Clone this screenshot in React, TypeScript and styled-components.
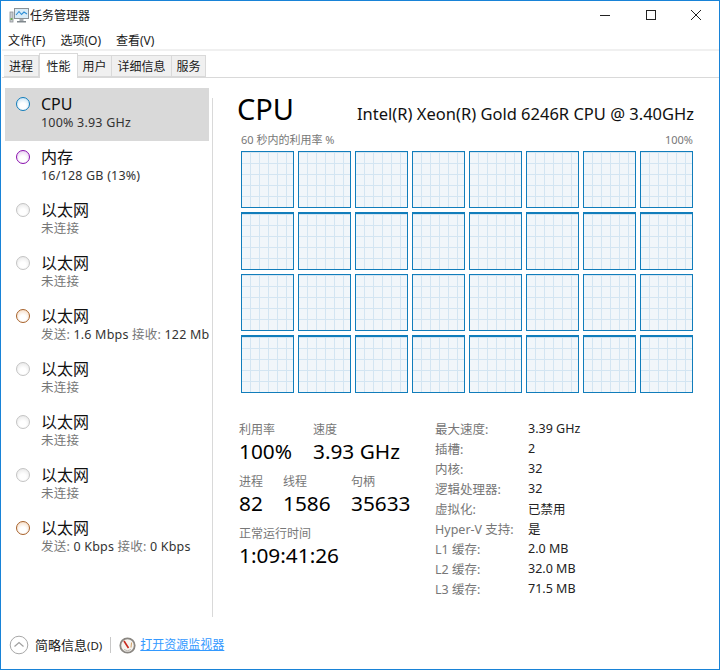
import React from 'react';
import styled, { createGlobalStyle } from 'styled-components';

const GlobalStyle = createGlobalStyle`
  html, body {
    margin: 0;
    padding: 0;
    background: #fff;
  }
  body {
    font-family: "Noto Sans", "Noto Sans CJK SC", sans-serif;
    color: #000;
  }
`;

const Window = styled.div`
  box-sizing: border-box;
  width: 720px;
  height: 670px;
  border: 1px solid #1883d7;
  padding-left: 1px;
  background: #fff;
  display: flex;
  flex-direction: column;
  overflow: hidden;
`;

const TitleBar = styled.div`
  height: 28px;
  flex: none;
  display: flex;
  align-items: center;
  padding-left: 7px;
  gap: 1px;
  font-size: 12px;
  color: #1a1a1a;
`;

const TitleText = styled.span`
  flex: 1;
`;

const WindowButtons = styled.div`
  display: flex;
  align-items: center;
  gap: 33.5px;
  padding-right: 17px;
`;

const MenuBar = styled.div`
  box-sizing: border-box;
  height: 22px;
  flex: none;
  display: flex;
  align-items: center;
  gap: 15px;
  padding: 2px 0 0 6px;
  font-size: 12px;
  color: #1a1a1a;
  border-bottom: 2px solid #f0f0f0;
`;

const TabStrip = styled.div`
  height: 26px;
  flex: none;
  display: flex;
  align-items: flex-end;
  padding-left: 2px;
  border-bottom: 1px solid #d9d9d9;
  font-size: 12px;
`;

const Tab = styled.div<{ $active?: boolean; $w: number }>`
  box-sizing: border-box;
  width: ${(p) => p.$w}px;
  height: ${(p) => (p.$active ? 25 : 22)}px;
  margin-bottom: ${(p) => (p.$active ? -1 : 0)}px;
  display: flex;
  align-items: center;
  justify-content: center;
  background: ${(p) => (p.$active ? '#fff' : '#f0f0f0')};
  border: 1px solid #d9d9d9;
  border-left-width: ${(p) => (p.$active ? 1 : 0)}px;
  border-bottom-width: ${(p) => (p.$active ? 0 : 1)}px;
  color: #1a1a1a;
  position: relative;
`;

const Body = styled.div`
  flex: 1;
  display: flex;
  min-height: 0;
`;

const Sidebar = styled.div`
  width: 207px;
  padding: 10px 0 0 3px;
  flex: none;
  box-sizing: border-box;
`;

const SideRow = styled.div<{ $selected?: boolean }>`
  width: 204px;
  height: 53px;
  display: flex;
  background: ${(p) => (p.$selected ? '#d9d9d9' : 'transparent')};
  padding: 6px 0 0 11px;
  box-sizing: border-box;
  white-space: nowrap;
`;

const Dot = styled.span<{ $edge: string; $fill: string }>`
  flex: none;
  box-sizing: border-box;
  width: 14px;
  height: 14px;
  margin-top: 3px;
  border-radius: 50%;
  border: 1px solid ${(p) => p.$edge};
  background: radial-gradient(circle at 50% 65%, #fff 30%, ${(p) => p.$fill} 100%);
`;

const SideText = styled.div`
  margin-left: 11px;
  display: flex;
  flex-direction: column;
`;

const SideName = styled.div`
  font-size: 16px;
  line-height: 20px;
  color: #111;
`;

const SideDetail = styled.div<{ $muted?: boolean }>`
  font-size: 12.5px;
  letter-spacing: 0.2px;
  line-height: 17px;
  color: ${(p) => (p.$muted ? '#777' : '#333')};
`;

const SideMuted = styled.span`
  color: #777;
`;

const Divider = styled.div`
  flex: none;
  width: 1px;
  height: 519px;
  margin: 20px 0 0 3px;
  background: #d9d9d9;
  position: relative;
  z-index: 1;
`;

const Main = styled.div`
  flex: 1;
  padding: 12px 25px 0 25px;
  min-width: 0;
  background: #fff;
`;

const Heading = styled.div`
  display: flex;
  justify-content: space-between;
  align-items: baseline;
`;

const HeadTitle = styled.div`
  font-size: 29px;
  line-height: 38px;
  margin-left: -1px;
`;

const HeadModel = styled.div`
  font-size: 16.5px;
  color: #111;
`;

const AxisRow = styled.div`
  display: flex;
  justify-content: space-between;
  font-size: 11px;
  line-height: 14px;
  color: #777;
  margin: 5px 1px 4px 3px;
`;

const CoreGrid = styled.div`
  display: grid;
  grid-template-columns: repeat(8, 53px);
  grid-template-rows: 57px 58px 57px 58px;
  gap: 4px;
  margin-left: 3px;
`;

const Core = styled.div<{ $thick?: boolean }>`
  box-sizing: border-box;
  border: 1px solid #117dbb;
  border-top-width: ${(p) => (p.$thick ? 2 : 1)}px;
  background-color: #f1f6fa;
  background-image:
    linear-gradient(to right, transparent 8px, #d3e5f2 8px),
    linear-gradient(to bottom, transparent 10px, #d3e5f2 10px);
  background-size: 9px 11px;
  background-position: 0 1px;
`;

const Stats = styled.div`
  display: flex;
  margin-top: 25px;
  padding-left: 1px;
`;

const Figures = styled.div`
  width: 196px;
  flex: none;
  display: flex;
  flex-direction: column;
  gap: 8px;
  margin-top: 3px;
`;

const FigureRow = styled.div`
  display: flex;
`;

const Figure = styled.div<{ $w?: number }>`
  width: ${(p) => (p.$w ? `${p.$w}px` : 'auto')};
  flex: none;
`;

const FigureLabel = styled.div`
  font-size: 12px;
  line-height: 17px;
  color: #777;
`;

const FigureValue = styled.div`
  font-size: 20.8px;
  line-height: 27px;
  color: #000;
`;

const Specs = styled.div`
  display: grid;
  grid-template-columns: 93px auto;
  grid-auto-rows: 20px;
  align-items: center;
  font-size: 12.5px;
`;

const SpecLabel = styled.div`
  color: #777;
`;

const SpecValue = styled.div`
  color: #222;
`;

const Footer = styled.div`
  height: 48px;
  flex: none;
  display: flex;
  align-items: center;
  padding-left: 7px;
  font-size: 12px;
`;

const Fewer = styled.span`
  margin-left: 6px;
  padding-bottom: 2px;
  font-size: 13px;
  color: #1a1a1a;
`;

const FewerKey = styled.span`
  font-size: 11.5px;
`;

const FooterRule = styled.span`
  width: 1px;
  height: 16px;
  background: #c8c8c8;
  margin: 0 8px;
`;

const MonitorLink = styled.span`
  margin: 0 0 2px 4px;
  color: #3399ff;
  text-decoration: underline;
`;

const AppIcon = () => (
  <svg width="20" height="18" viewBox="0 0 20 18">
    <rect x="1" y="6" width="3" height="10" fill="#c9ced1" stroke="#8d9296" strokeWidth="0.8" />
    <rect x="1.6" y="12" width="1.8" height="2" fill="#6fae4e" />
    <rect x="5.5" y="2.5" width="14" height="10" fill="#d9ecf8" stroke="#8b9297" />
    <path d="M7 9 L10 5.5 L12.5 8.5 L15 6 L18 8" fill="none" stroke="#2f8fd6" strokeWidth="1.1" />
    <rect x="10.5" y="13" width="4" height="2" fill="#a6acb0" />
    <rect x="8" y="15" width="9" height="1.5" fill="#80878c" />
  </svg>
);

const WinIcon = ({ kind }: { kind: 'min' | 'max' | 'close' }) => (
  <svg width="12" height="12" viewBox="0 0 12 12" fill="none" stroke="#222" strokeWidth="1">
    {kind === 'min' && <path d="M1 6.5H11" />}
    {kind === 'max' && <rect x="1.5" y="1.5" width="9" height="9" />}
    {kind === 'close' && <path d="M1 1L11 11M11 1L1 11" />}
  </svg>
);

const Chevron = () => (
  <svg width="20" height="20" viewBox="0 0 20 20" fill="none">
    <circle cx="10" cy="10" r="8.8" stroke="#a8a8a8" strokeWidth="1" fill="#fff" />
    <path d="M5.5 11.5L10 7.5L14.5 11.5" stroke="#a0a0a0" strokeWidth="1.2" />
  </svg>
);

const GaugeIcon = () => (
  <svg width="17" height="17" viewBox="0 0 17 17" fill="none">
    <circle cx="8.5" cy="8.5" r="7.2" fill="#f7f4f0" stroke="#8a8681" strokeWidth="1.8" />
    <path d="M5 4L9.5 11" stroke="#c8281e" strokeWidth="1.6" />
    <path d="M12.6 5.5L12 10.5" stroke="#d2a46e" strokeWidth="1.1" />
    <path d="M5 12.5Q8.5 15 12 12.5" stroke="#bdb8b2" strokeWidth="1" />
  </svg>
);

type SideItem = { name: string; edge: string; fill: string; detail?: React.ReactNode; muted?: boolean };

const idle = { name: '以太网', edge: '#c4c4c4', fill: '#e2e2e2', detail: '未连接', muted: true };
const busy = { name: '以太网', edge: '#a7622b', fill: '#f3d3b6' };

const items: SideItem[] = [
  { name: 'CPU', edge: '#117dbb', fill: '#bcdcf0', detail: '100% 3.93 GHz' },
  { name: '内存', edge: '#8b12ae', fill: '#e3c3ee', detail: '16/128 GB (13%)' },
  idle,
  idle,
  { ...busy, detail: <><SideMuted>发送:</SideMuted> 1.6 Mbps <SideMuted>接收:</SideMuted> 122 Mb</> },
  idle,
  idle,
  idle,
  { ...busy, detail: <><SideMuted>发送:</SideMuted> 0 Kbps <SideMuted>接收:</SideMuted> 0 Kbps</> },
];

const specs = [
  ['最大速度:', '3.39 GHz'],
  ['插槽:', '2'],
  ['内核:', '32'],
  ['逻辑处理器:', '32'],
  ['虚拟化:', '已禁用'],
  ['Hyper-V 支持:', '是'],
  ['L1 缓存:', '2.0 MB'],
  ['L2 缓存:', '32.0 MB'],
  ['L3 缓存:', '71.5 MB'],
];

const tabs = [
  { label: '进程', w: 35 },
  { label: '性能', w: 39, active: true },
  { label: '用户', w: 34 },
  { label: '详细信息', w: 60 },
  { label: '服务', w: 34 },
];

export default function App() {
  return (
    <>
      <GlobalStyle />
      <Window>
        <TitleBar>
          <AppIcon />
          <TitleText>任务管理器</TitleText>
          <WindowButtons>
            <WinIcon kind="min" />
            <WinIcon kind="max" />
            <WinIcon kind="close" />
          </WindowButtons>
        </TitleBar>
        <MenuBar>
          <span>文件(F)</span>
          <span>选项(O)</span>
          <span>查看(V)</span>
        </MenuBar>
        <TabStrip>
          {tabs.map((t) => (
            <Tab key={t.label} $w={t.w} $active={t.active}>{t.label}</Tab>
          ))}
        </TabStrip>
        <Body>
          <Sidebar>
            {items.map((it, i) => (
              <SideRow key={i} $selected={i === 0}>
                <Dot $edge={it.edge} $fill={it.fill} />
                <SideText>
                  <SideName>{it.name}</SideName>
                  <SideDetail $muted={it.muted}>{it.detail}</SideDetail>
                </SideText>
              </SideRow>
            ))}
          </Sidebar>
          <Divider />
          <Main>
            <Heading>
              <HeadTitle>CPU</HeadTitle>
              <HeadModel>Intel(R) Xeon(R) Gold 6246R CPU @ 3.40GHz</HeadModel>
            </Heading>
            <AxisRow>
              <span>60 秒内的利用率 %</span>
              <span>100%</span>
            </AxisRow>
            <CoreGrid>
              {Array.from({ length: 32 }, (_, i) => (
                <Core key={i} $thick={Math.floor(i / 8) % 2 === 1} />
              ))}
            </CoreGrid>
            <Stats>
              <Figures>
                <FigureRow>
                  <Figure $w={74}>
                    <FigureLabel>利用率</FigureLabel>
                    <FigureValue>100%</FigureValue>
                  </Figure>
                  <Figure>
                    <FigureLabel>速度</FigureLabel>
                    <FigureValue>3.93 GHz</FigureValue>
                  </Figure>
                </FigureRow>
                <FigureRow>
                  <Figure $w={44}>
                    <FigureLabel>进程</FigureLabel>
                    <FigureValue>82</FigureValue>
                  </Figure>
                  <Figure $w={68}>
                    <FigureLabel>线程</FigureLabel>
                    <FigureValue>1586</FigureValue>
                  </Figure>
                  <Figure>
                    <FigureLabel>句柄</FigureLabel>
                    <FigureValue>35633</FigureValue>
                  </Figure>
                </FigureRow>
                <Figure>
                  <FigureLabel>正常运行时间</FigureLabel>
                  <FigureValue>1:09:41:26</FigureValue>
                </Figure>
              </Figures>
              <Specs>
                {specs.map(([k, v]) => (
                  <React.Fragment key={k}>
                    <SpecLabel>{k}</SpecLabel>
                    <SpecValue>{v}</SpecValue>
                  </React.Fragment>
                ))}
              </Specs>
            </Stats>
          </Main>
        </Body>
        <Footer>
          <Chevron />
          <Fewer>简略信息<FewerKey>(D)</FewerKey></Fewer>
          <FooterRule />
          <GaugeIcon />
          <MonitorLink>打开资源监视器</MonitorLink>
        </Footer>
      </Window>
    </>
  );
}
